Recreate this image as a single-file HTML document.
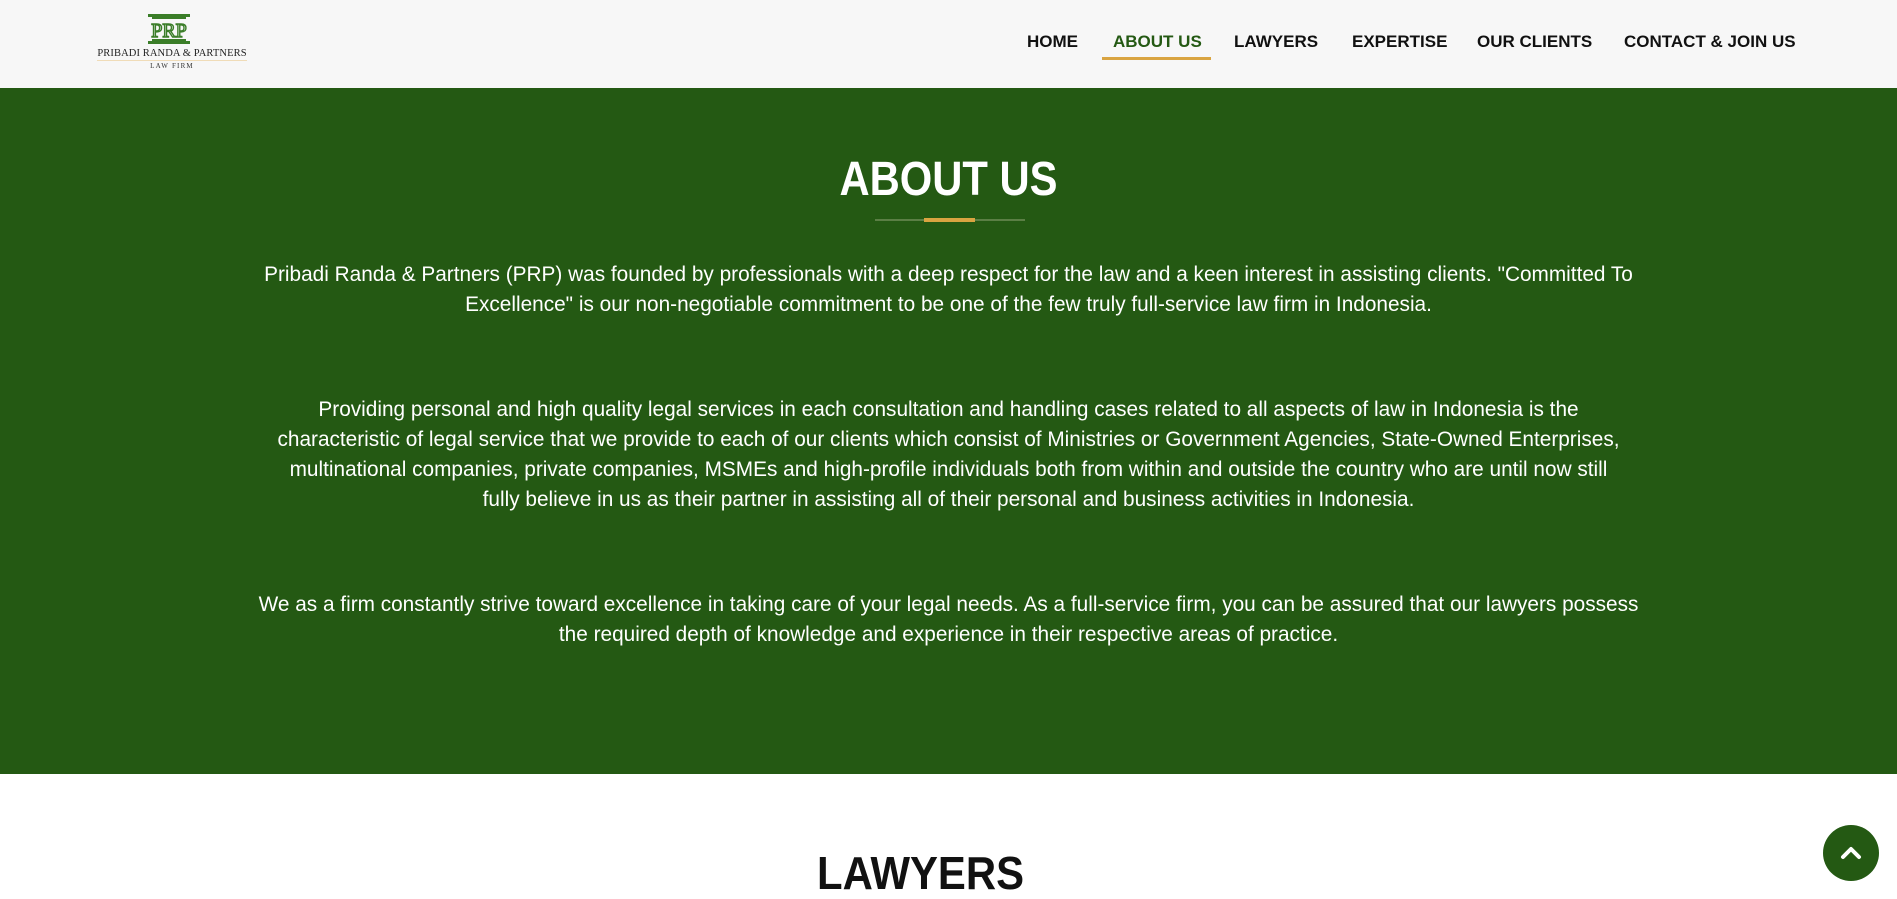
<!DOCTYPE html>
<html><head><meta charset="utf-8">
<style>
*{margin:0;padding:0;box-sizing:border-box}
html,body{width:1897px;height:893px;overflow:hidden;background:#fff;font-family:"Liberation Sans",sans-serif}
.header{position:absolute;left:0;top:0;width:1897px;height:88px;background:#f7f7f7}
.nav a{position:absolute;top:32px;font-weight:bold;font-size:17px;color:#111;text-decoration:none;white-space:nowrap;line-height:20px}
.under{position:absolute;left:1102px;top:57px;width:109px;height:3px;background:#d9a441}
.green{position:absolute;left:0;top:88px;width:1897px;height:686px;background:#245913}
h1{position:absolute;left:0;width:1897px;top:155px;text-align:center;color:#fff;font-size:48px;font-weight:bold;line-height:50px;transform:scaleX(0.87)}
.line{position:absolute;left:875px;top:219px;width:150px;height:2px;background:#5b7f45}
.gold{position:absolute;left:924px;top:218px;width:51px;height:4px;background:#d9a441}
.p{position:absolute;left:0;width:1897px;text-align:center;color:#fff;font-size:20.8px;line-height:30px}
h2{position:absolute;left:-28px;width:1897px;top:849px;text-align:center;color:#111;font-size:46px;font-weight:bold;line-height:48px;transform:scaleX(0.91)}
.top{position:absolute;left:1823px;top:825px;width:56px;height:56px;border-radius:50%;background:#245913}
</style></head><body>
<div class="header">
  <svg style="position:absolute;left:148px;top:14px" width="42" height="31" viewBox="0 0 42 31">
    <rect x="0" y="0" width="42" height="3" fill="#3a7d28"/>
    <rect x="4" y="3" width="34" height="2" fill="#3a7d28"/>
    <rect x="4" y="25" width="34" height="2" fill="#3a7d28"/>
    <rect x="0" y="27" width="42" height="3" fill="#3a7d28"/>
    <text x="21" y="23" text-anchor="middle" font-family="Liberation Serif,serif" font-size="20" fill="none" stroke="#3a7d28" stroke-width="1.4">PRP</text>
  </svg>
  <div style="position:absolute;left:97px;top:47px;width:150px;text-align:center;font-family:'Liberation Serif',serif;font-size:10.5px;color:#222;letter-spacing:0.1px;white-space:nowrap;border-bottom:1px solid #f0dcb8;line-height:13px">PRIBADI RANDA &amp; PARTNERS</div>
  <div style="position:absolute;left:97px;top:62px;width:150px;text-align:center;font-family:'Liberation Serif',serif;font-size:7px;color:#333;letter-spacing:1.2px">LAW FIRM</div>
  <div class="nav">
    <a style="left:1027px">HOME</a>
    <a style="left:1113px;color:#245913">ABOUT US</a>
    <a style="left:1234px">LAWYERS</a>
    <a style="left:1352px">EXPERTISE</a>
    <a style="left:1477px">OUR CLIENTS</a>
    <a style="left:1624px">CONTACT &amp; JOIN US</a>
  </div>
  <div class="under"></div>
</div>
<div class="green"></div>
<h1>ABOUT US</h1>
<div class="line"></div><div class="gold"></div>
<div class="p" style="top:260px">Pribadi Randa &amp; Partners (PRP) was founded by professionals with a deep respect for the law and a keen interest in assisting clients. "Committed To<br>Excellence" is our non-negotiable commitment to be one of the few truly full-service law firm in Indonesia.</div>
<div class="p" style="top:395px">Providing personal and high quality legal services in each consultation and handling cases related to all aspects of law in Indonesia is the<br>characteristic of legal service that we provide to each of our clients which consist of Ministries or Government Agencies, State-Owned Enterprises,<br>multinational companies, private companies, MSMEs and high-profile individuals both from within and outside the country who are until now still<br>fully believe in us as their partner in assisting all of their personal and business activities in Indonesia.</div>
<div class="p" style="top:590px">We as a firm constantly strive toward excellence in taking care of your legal needs. As a full-service firm, you can be assured that our lawyers possess<br>the required depth of knowledge and experience in their respective areas of practice.</div>
<h2>LAWYERS</h2>
<div class="top"><svg width="56" height="56" viewBox="0 0 56 56"><path d="M20 32 L28 24 L36 32" fill="none" stroke="#fff" stroke-width="4" stroke-linecap="round" stroke-linejoin="round"/></svg></div>
</body></html>
